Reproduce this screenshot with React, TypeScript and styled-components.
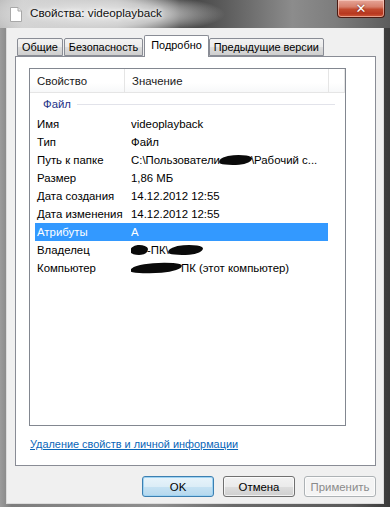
import React from "react";
import styled, { createGlobalStyle } from "styled-components";

const FS = "11.4px";

const Global = createGlobalStyle`
  html, body { margin: 0; padding: 0; }
  body { width: 390px; height: 507px; overflow: hidden; font-family: "Liberation Sans", Arial, sans-serif; font-size: ${FS}; }
`;

const Window = styled.div`
  width: 390px;
  height: 507px;
  box-sizing: border-box;
  display: flex;
  flex-direction: column;
  background: linear-gradient(90deg, #9c9c9c 0%, #7d7d7d 3%, #8f8f8f 40%, #6a6a6a 60%, #5a5a5a 90%, #3a3a3a 100%);
  padding: 0 7px 4px 7px;
`;

const TitleBar = styled.div`
  height: 28px;
  margin: 0 -7px;
  display: flex;
  align-items: flex-start;
  position: relative;
  background:
    radial-gradient(ellipse 130px 22px at 95px 14px, rgba(235,235,235,0.95) 0%, rgba(215,215,215,0.8) 55%, rgba(200,200,200,0) 100%),
    linear-gradient(90deg, #bdbdbd 0%, #d2d2d2 6%, #b9b9b9 30%, #3f3f3f 46%, #5d5d5d 58%, #8c8c8c 75%, #7d7d7d 86%, #5c5c5c 100%);
`;

const TitleIcon = styled.svg`
  margin: 7px 0 0 10px;
  flex: none;
`;

const TitleText = styled.div`
  margin: 6px 0 0 8px;
  font-size: 11.7px;
  color: #111;
  text-shadow: 0 0 6px #fff, 0 0 4px #fff;
`;

const CloseButton = styled.div`
  position: absolute;
  right: 5px;
  top: 0;
  width: 46px;
  height: 17px;
  border: 1px solid #4a1a12;
  border-top: none;
  border-radius: 0 0 4px 4px;
  background: linear-gradient(180deg, #e6a597 0%, #d7806c 40%, #c24a2e 55%, #b83820 80%, #cf5a3a 100%);
  box-shadow: inset 0 0 0 1px rgba(255,220,210,0.55);
  display: flex;
  align-items: center;
  justify-content: center;
  color: #fff;
  font-family: "DejaVu Sans", sans-serif;
  font-weight: bold;
  font-size: 13px;
  text-shadow: 0 0 2px #6a1a0a;
`;

const Client = styled.div`
  flex: 1;
  background: #f0f0f0;
  display: flex;
  flex-direction: column;
  padding: 7px 7px 6px 8px;
  box-shadow: 0 0 0 1px #dcdcdc;
`;

const TabStrip = styled.div`
  display: flex;
  align-items: flex-end;
  height: 21px;
  padding-left: 2px;
  position: relative;
  z-index: 1;
`;

const Tab = styled.div<{ $active?: boolean }>`
  box-sizing: border-box;
  height: ${(p) => (p.$active ? 22 : 18)}px;
  margin: ${(p) => (p.$active ? "0 0 -1px 0" : "0 1px 0 0")};
  padding: ${(p) => (p.$active ? "3px 6px 0 6px" : "2px 4px 0 4px")};
  border: 1px solid #898c95;
  border-bottom: ${(p) => (p.$active ? "none" : "1px solid #898c95")};
  border-radius: 2px 2px 0 0;
  background: ${(p) => (p.$active ? "#fff" : "linear-gradient(180deg, #f3f3f3 0%, #ebebeb 50%, #dddddd 51%, #cfcfcf 100%)")};
  font-size: 10.9px;
  color: #000;
  white-space: nowrap;
  position: relative;
  z-index: ${(p) => (p.$active ? 2 : 1)};
`;

const Panel = styled.div`
  flex: 1;
  background: #fff;
  border: 1px solid #898c95;
  display: flex;
  flex-direction: column;
  padding: 11px 29px 0 13px;
`;

const ListBox = styled.div`
  height: 358px;
  box-sizing: border-box;
  border: 1px solid #828790;
  display: flex;
  flex-direction: column;
`;

const HeaderRow = styled.div`
  height: 23px;
  display: flex;
  border-bottom: 1px solid #e5e5e5;
  background: linear-gradient(180deg, #ffffff 0%, #ffffff 60%, #f7f8f9 100%);
  flex: none;
`;

const HeaderCell = styled.div<{ $w?: number }>`
  width: ${(p) => (p.$w ? `${p.$w}px` : "auto")};
  flex: ${(p) => (p.$w ? "none" : "1")};
  box-sizing: border-box;
  padding-left: 7px;
  display: flex;
  align-items: center;
  border-right: 1px solid #e5e5e5;
  color: #1a1a1a;
  font-size: ${FS};
`;

const GroupRow = styled.div`
  height: 22px;
  display: flex;
  align-items: center;
  padding: 0 10px 0 13px;
  gap: 6px;
  flex: none;
`;

const GroupTitle = styled.span`
  color: #1e3287;
  font-size: ${FS};
`;

const GroupLine = styled.div`
  flex: 1;
  height: 1px;
  background: #e2e3ea;
  margin-top: 1px;
`;

const Rows = styled.div`
  padding-left: 5px;
  display: flex;
  flex-direction: column;
`;

const Row = styled.div<{ $selected?: boolean }>`
  height: 18px;
  width: 293px;
  display: flex;
  align-items: center;
  background: ${(p) => (p.$selected ? "#3399ff" : "transparent")};
  color: ${(p) => (p.$selected ? "#fff" : "#000")};
  font-size: ${FS};
  white-space: nowrap;
`;

const NameCell = styled.div`
  width: 94px;
  padding-left: 2px;
  flex: none;
  overflow: hidden;
`;

const ValueCell = styled.div`
  flex: 1;
  display: flex;
  align-items: center;
  overflow: hidden;
`;

const Blot = styled.span<{ $w: number }>`
  display: inline-block;
  width: ${(p) => p.$w}px;
  height: 10px;
  background: #0a0a0a;
  border-radius: 45% 55% 40% 60% / 60% 45% 55% 40%;
  transform: rotate(-4deg);
  margin: 0 -1px;
`;

const LinkArea = styled.div`
  padding: 12px 0 0 1px;
`;

const Link = styled.span`
  color: #0a66b8;
  text-decoration: underline;
  font-size: 10.9px;
`;

const ButtonRow = styled.div`
  display: flex;
  justify-content: flex-end;
  gap: 9px;
  margin-top: 10px;
  height: 21px;
`;

const Button = styled.div<{ $variant?: "default" | "disabled" }>`
  width: 72px;
  height: 21px;
  box-sizing: border-box;
  border-radius: 3px;
  display: flex;
  align-items: center;
  justify-content: center;
  font-size: ${FS};
  border: 1px solid ${(p) => (p.$variant === "default" ? "#3c7fb1" : p.$variant === "disabled" ? "#adb2b5" : "#707070")};
  color: ${(p) => (p.$variant === "disabled" ? "#8a8a8a" : "#000")};
  background: ${(p) =>
    p.$variant === "default"
      ? "linear-gradient(180deg, #e8f4fb 0%, #dcedf7 50%, #c6e2f3 51%, #b5d8ee 100%)"
      : p.$variant === "disabled"
      ? "#f4f4f4"
      : "linear-gradient(180deg, #f2f2f2 0%, #ebebeb 50%, #dddddd 51%, #cfcfcf 100%)"};
  box-shadow: ${(p) => (p.$variant === "default" ? "inset 0 0 0 1px #9fd3f2" : "inset 0 0 0 1px rgba(255,255,255,0.7)")};
`;

const rows: { name: string; value: React.ReactNode; selected?: boolean }[] = [
  { name: "Имя", value: "videoplayback" },
  { name: "Тип", value: "Файл" },
  {
    name: "Путь к папке",
    value: (
      <>
        C:\Пользователи<Blot $w={33} />\Рабочий с...
      </>
    ),
  },
  { name: "Размер", value: "1,86 МБ" },
  { name: "Дата создания", value: "14.12.2012 12:55" },
  { name: "Дата изменения", value: "14.12.2012 12:55" },
  { name: "Атрибуты", value: "A", selected: true },
  {
    name: "Владелец",
    value: (
      <>
        <Blot $w={18} />-ПК\<Blot $w={35} />
      </>
    ),
  },
  {
    name: "Компьютер",
    value: (
      <>
        <Blot $w={52} />ПК (этот компьютер)
      </>
    ),
  },
];

export default function App() {
  return (
    <>
      <Global />
      <Window>
        <TitleBar>
          <TitleIcon width="12" height="15" viewBox="0 0 12 15">
            <path d="M0.5 0.5 H8 L11.5 4 V14.5 H0.5 Z" fill="#fff" stroke="#a8a8a8" />
            <path d="M8 0.5 V4 H11.5" fill="#e8e8e8" stroke="#a8a8a8" />
          </TitleIcon>
          <TitleText>Свойства: videoplayback</TitleText>
          <CloseButton>✕</CloseButton>
        </TitleBar>
        <Client>
          <TabStrip>
            <Tab>Общие</Tab>
            <Tab>Безопасность</Tab>
            <Tab $active>Подробно</Tab>
            <Tab>Предыдущие версии</Tab>
          </TabStrip>
          <Panel>
            <ListBox>
              <HeaderRow>
                <HeaderCell $w={95}>Свойство</HeaderCell>
                <HeaderCell $w={204}>Значение</HeaderCell>
                <HeaderCell />
              </HeaderRow>
              <GroupRow>
                <GroupTitle>Файл</GroupTitle>
                <GroupLine />
              </GroupRow>
              <Rows>
                {rows.map((r) => (
                  <Row key={r.name} $selected={r.selected}>
                    <NameCell>{r.name}</NameCell>
                    <ValueCell>{r.value}</ValueCell>
                  </Row>
                ))}
              </Rows>
            </ListBox>
            <LinkArea>
              <Link>Удаление свойств и личной информации</Link>
            </LinkArea>
          </Panel>
          <ButtonRow>
            <Button $variant="default">OK</Button>
            <Button>Отмена</Button>
            <Button $variant="disabled">Применить</Button>
          </ButtonRow>
        </Client>
      </Window>
    </>
  );
}
